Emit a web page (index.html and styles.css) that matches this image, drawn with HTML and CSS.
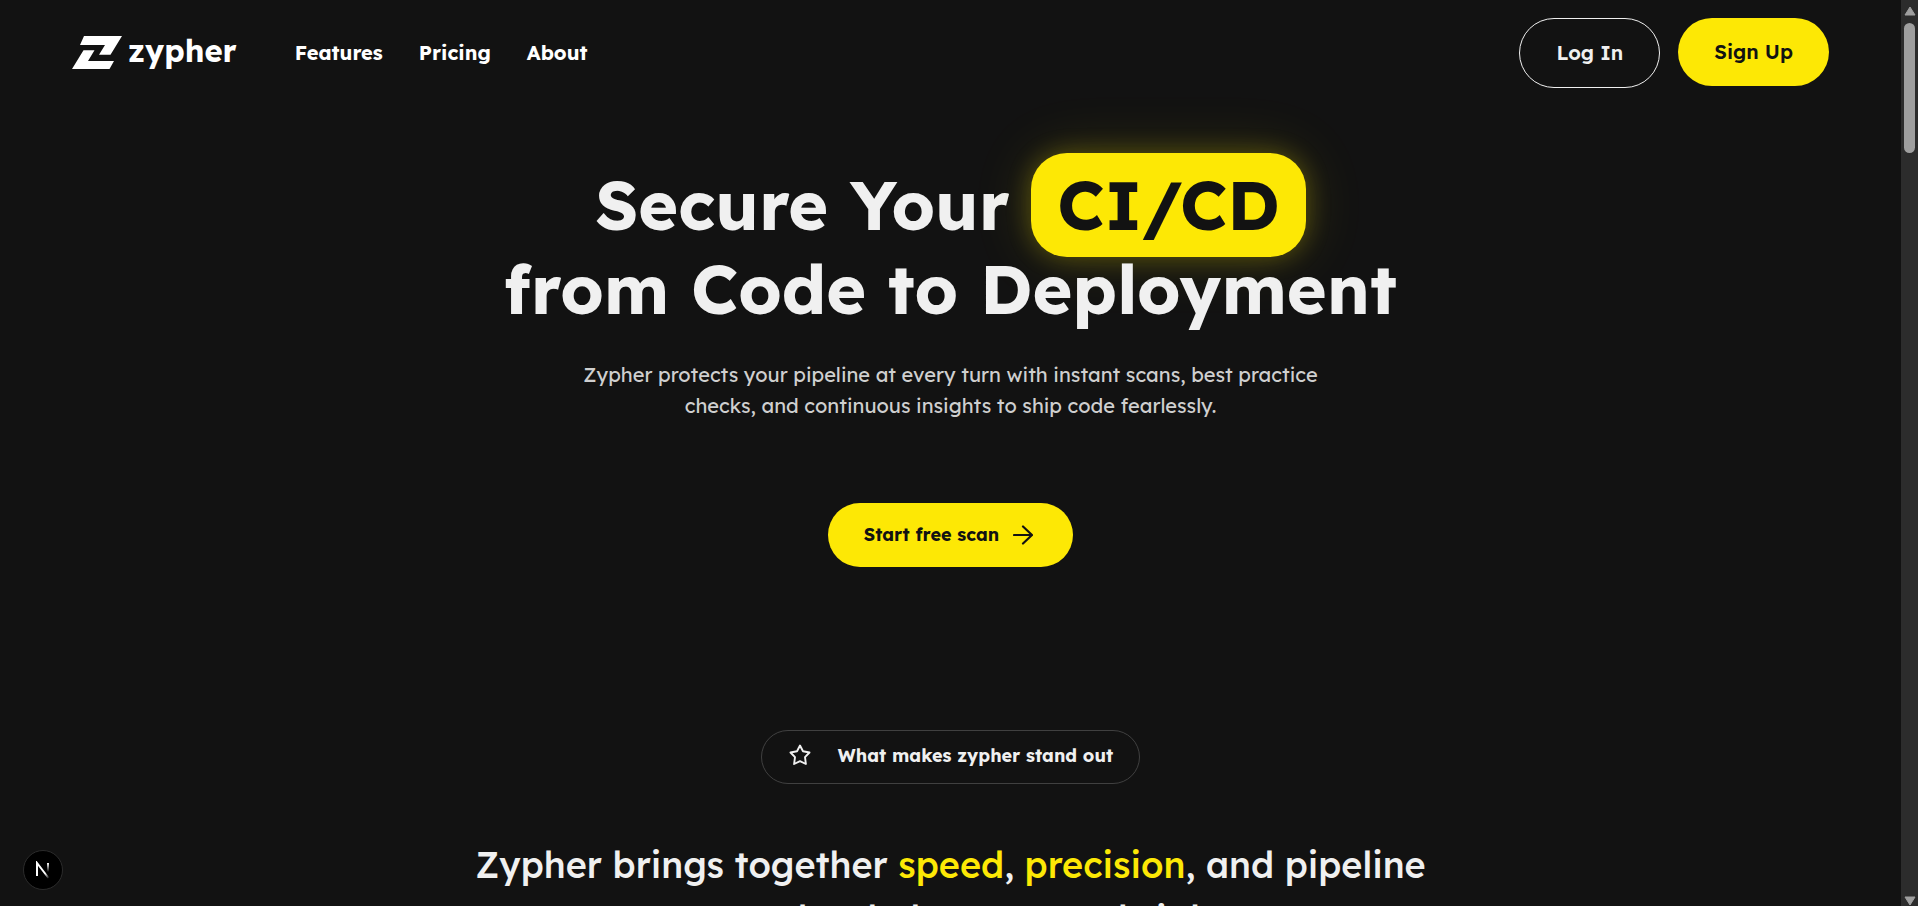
FILE: index.html
```html
<!DOCTYPE html>
<html lang="en">
<head>
<meta charset="utf-8">
<meta name="viewport" content="width=device-width, initial-scale=1">
<title>Zypher</title>
<link rel="stylesheet" href="styles.css">
</head>
<body>
<div class="page">
  <header class="header">
    <a class="logo" href="#">
      <svg class="logo-mark" viewBox="0 0 50 35" preserveAspectRatio="none" aria-hidden="true"><path d="M12 0H50L38.500 20H27L33 9.500H8ZM11.500 15H22.500L16 26.500H42L37.500 35H0Z" fill="#fff"/></svg>
      <span>zypher</span>
    </a>
    <nav class="nav">
      <a href="#">Features</a>
      <a href="#">Pricing</a>
      <a href="#">About</a>
    </nav>
    <div class="actions">
      <button class="button button-outline" type="button">Log In</button>
      <button class="button button-solid" type="button">Sign Up</button>
    </div>
  </header>
  <main>
    <section class="hero">
      <h1>Secure Your <span class="highlight">CI/CD</span><br>from Code to Deployment</h1>
      <p>Zypher protects your pipeline at every turn with instant scans, best practice<br>checks, and continuous insights to ship code fearlessly.</p>
      <button class="cta" type="button">Start free scan
        <svg viewBox="0 0 20 20" aria-hidden="true"><path d="M1 10H19M10 1.500L19 10L10 18.500" fill="none" stroke="#121212" stroke-width="2.200" stroke-linecap="round" stroke-linejoin="round"/></svg>
      </button>
    </section>
    <section class="standout">
      <div class="badge">
        <svg viewBox="0 0 24 24" aria-hidden="true"><path d="M12 2.500L15 8.300L21.500 9.500L17 14.200L17.900 21L12 18.200L6.100 21L7 14.200L2.500 9.500L9 8.300Z" fill="none" stroke="#f0f0f0" stroke-width="1.900" stroke-linejoin="round"/></svg>
        <span>What makes zypher stand out</span>
      </div>
      <h2>Zypher brings together <em>speed</em>, <em>precision</em>, and pipeline<br>success that helps you see brighter</h2>
    </section>
  </main>
</div>
<div class="scrollbar" aria-hidden="true">
  <svg viewBox="0 0 12 10"><path d="M6 1L11 9H1Z" fill="#9f9f9f" stroke="#9f9f9f" stroke-linejoin="round"/></svg>
  <div class="thumb"></div>
  <svg viewBox="0 0 12 10"><path d="M6 9L11 1H1Z" fill="#9f9f9f" stroke="#9f9f9f" stroke-linejoin="round"/></svg>
</div>
<button class="dev-badge" type="button" aria-label="Developer tools">
  <svg viewBox="0 0 16 18" aria-hidden="true">
    <defs>
      <linearGradient id="stem" x1="0" y1="0" x2="0" y2="1"><stop offset="0" stop-color="#fff"/><stop offset="1" stop-color="#fff" stop-opacity="0"/></linearGradient>
      <linearGradient id="diagonal" x1="0" y1="0" x2="1" y2="1"><stop offset=".7" stop-color="#fff"/><stop offset="1" stop-color="#fff" stop-opacity=".1"/></linearGradient>
    </defs>
    <path d="M2 15V2L13.500 17" fill="none" stroke="url(#diagonal)" stroke-width="2"/>
    <rect x="12" y="2" width="2" height="9" fill="url(#stem)"/>
  </svg>
</button>
</body>
</html>
```
FILE: styles.css
```css
* { box-sizing: border-box; }
body {
  margin: 0;
  height: 100vh;
  display: flex;
  overflow: hidden;
  background: #121212;
  color: #f0f0f0;
  font-family: Lexend, Inter, sans-serif;
}
a { color: inherit; text-decoration: none; }
button { font-family: inherit; cursor: pointer; }
.page { flex: 1; min-width: 0; }

.header {
  display: flex;
  align-items: flex-start;
  padding: 18px 72px 0;
}
.logo {
  display: flex;
  align-items: center;
  gap: 6px;
  height: 68px;
  color: #fff;
  font-size: 31px;
  font-weight: 700;
  line-height: 32px;
}
.logo-mark { width: 50px; height: 33px; }
.logo span { padding-bottom: 3px; }
.nav {
  display: flex;
  align-items: center;
  gap: 36px;
  height: 68px;
  margin-left: 58px;
  color: #fff;
  font-size: 20px;
  font-weight: 700;
}
.actions { display: flex; align-items: flex-start; gap: 18px; margin-left: auto; }
.button {
  padding: 0 36px 2px;
  border: 0;
  border-radius: 36px;
  font-size: 20px;
  font-weight: 600;
}
.button-outline {
  height: 70px;
  border: 1px solid #f0f0f0;
  background: transparent;
  color: #f0f0f0;
}
.button-solid { height: 68px; background: #fde805; color: #121212; }

.hero {
  display: flex;
  flex-direction: column;
  align-items: center;
  padding-top: 75px;
  text-align: center;
}
h1 {
  margin: 0;
  font-size: 68px;
  font-weight: 700;
  line-height: 84px;
}
.highlight {
  display: inline-block;
  margin: -10px 0;
  padding: 10px 26px;
  border-radius: 36px;
  background: #fde805;
  box-shadow: 0 0 24px rgba(253, 232, 5, .25), 0 0 60px rgba(253, 232, 5, .15);
  color: #121212;
}
.hero p {
  margin: 28px 0 0;
  color: #cfcfcf;
  font-size: 20px;
  line-height: 31px;
}
.cta {
  display: flex;
  align-items: center;
  gap: 14px;
  height: 64px;
  margin-top: 82px;
  padding: 0 40px 1px 36px;
  border: 0;
  border-radius: 32px;
  background: #fde805;
  color: #121212;
  font-size: 18px;
  font-weight: 700;
}
.cta svg { width: 20px; height: 20px; }

.standout {
  display: flex;
  flex-direction: column;
  align-items: center;
  padding-top: 163px;
  text-align: center;
}
.badge {
  display: flex;
  align-items: center;
  gap: 26px;
  height: 54px;
  padding: 0 26px 3px;
  border: 1px solid #404040;
  border-radius: 27px;
  font-size: 18px;
  font-weight: 700;
}
.badge svg { width: 24px; height: 24px; margin-bottom: 2px; }
h2 {
  margin: 54px 0 0;
  font-size: 36px;
  font-weight: 500;
  line-height: 54px;
}
h2 em { color: #fde805; font-style: normal; }

.scrollbar {
  display: flex;
  flex-direction: column;
  align-items: center;
  width: 17px;
  padding: 6px 0 0;
  background: #2c2c2c;
}
.scrollbar svg { width: 12px; height: 10px; }
.thumb {
  width: 11px;
  height: 130px;
  margin: 7px 0 auto;
  border-radius: 6px;
  background: #9f9f9f;
}
.dev-badge {
  position: fixed;
  bottom: 16px;
  left: 23px;
  display: grid;
  place-items: center;
  width: 40px;
  height: 40px;
  padding: 0;
  border: 1px solid #2c2c2c;
  border-radius: 50%;
  background: #000;
}
.dev-badge svg { width: 16px; height: 18px; }
```
